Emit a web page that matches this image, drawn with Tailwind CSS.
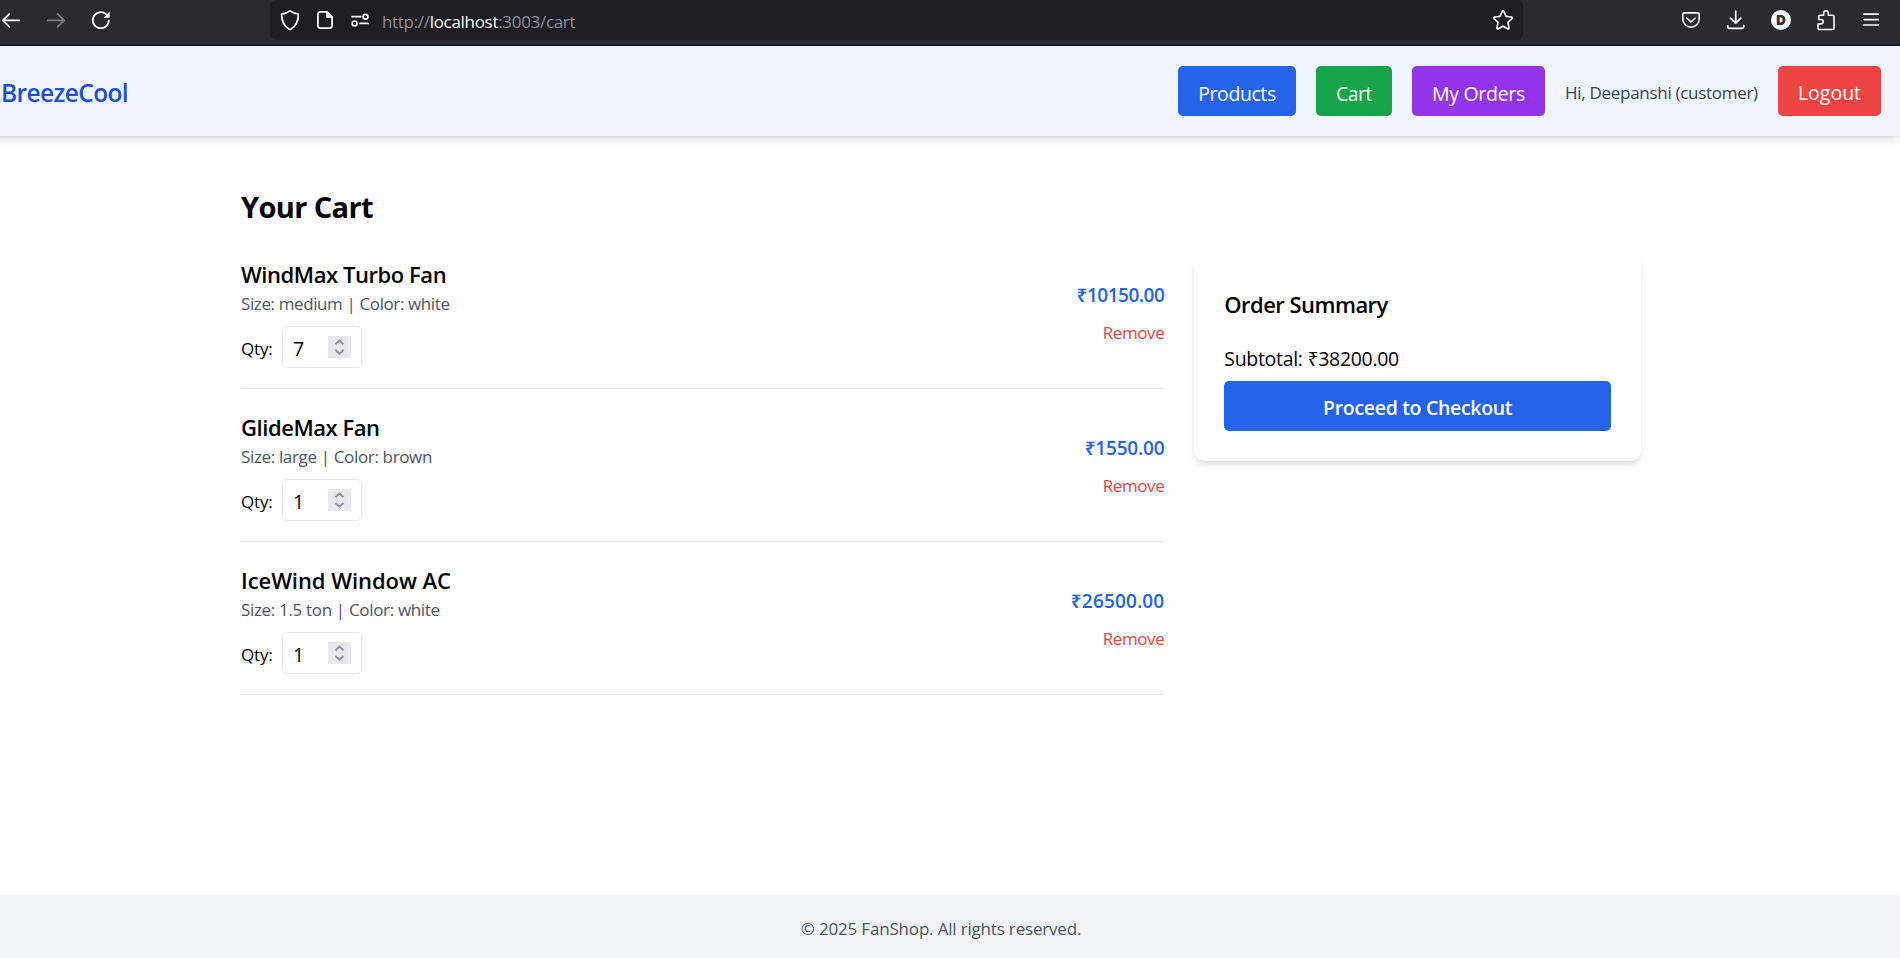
<!DOCTYPE html>
<html lang="en">
<head>
<meta charset="utf-8">
<title>BreezeCool - Cart</title>
<script src="https://cdn.jsdelivr.net/npm/@tailwindcss/browser@4"></script>
</head>
<body class="flex h-screen flex-col overflow-hidden bg-white font-['Open_Sans','Noto_Sans',sans-serif] text-black">

<!-- Browser toolbar -->
<div class="flex h-[46px] shrink-0 items-start justify-between border-b border-[#0c0c0d] bg-[#2b2a33] text-[#fbfbfe]">
  <div class="flex h-10 w-[270px] items-center gap-[25px] pl-px">
    <svg class="size-5" viewBox="0 0 20 20" fill="none" stroke="currentColor" stroke-width="1.8" stroke-linecap="round" stroke-linejoin="round"><path d="M18.2 10.4H1.8M8.4 3.9 1.8 10.4l6.6 6.5"/></svg>
    <svg class="size-5 text-[#7d7c83]" viewBox="0 0 20 20" fill="none" stroke="currentColor" stroke-width="1.8" stroke-linecap="round" stroke-linejoin="round"><path d="M1.8 10.4h16.4M11.6 3.9l6.6 6.5-6.6 6.5"/></svg>
    <svg class="size-5" viewBox="0 0 20 20" fill="none" stroke="currentColor" stroke-width="1.8" stroke-linecap="round"><path d="M17.8 10.6A8 8 0 1 1 15 4.1"/><path d="M18.6 1.6v5.6a.5.5 0 0 1-.5.5h-5.4z" fill="currentColor" stroke="none"/></svg>
  </div>
  <div class="flex h-10 w-[1253px] items-center justify-between rounded-md bg-[#1e1d23] pr-[9px] pl-2.5">
    <div class="flex items-center">
      <svg class="h-[22px] w-5" viewBox="0 0 20 22" fill="none" stroke="currentColor" stroke-width="1.8" stroke-linejoin="round"><path d="M10 1.9c2.300 1.700 4.900 2.600 7.700 3 .5 0 .7.3.7.8-.1 6.300-2.400 11.300-7.600 14.500-.5.3-1.100.3-1.600 0C4 17 1.700 12 1.600 5.700c0-.5.2-.8.7-.8 2.800-.4 5.400-1.300 7.700-3z"/></svg>
      <svg class="ml-[15px] h-5 w-5" viewBox="0 0 20 20" fill="none" stroke="currentColor" stroke-width="1.8" stroke-linejoin="round"><path d="M12 1.900H5.400a2.500 2.500 0 0 0-2.500 2.500v11.200a2.500 2.500 0 0 0 2.500 2.500h9.200a2.500 2.500 0 0 0 2.500-2.500V7z"/><path d="M11.200 1.900v4.700c0 .8.500 1.300 1.300 1.300h4.600z" fill="currentColor" stroke="none"/></svg>
      <svg class="ml-[15px] h-5 w-5" viewBox="0 0 20 20" fill="none" stroke="currentColor" stroke-width="1.700" stroke-linecap="round"><path d="M2 6.700h8.800M10 13.400h8.200"/><circle cx="15.500" cy="6.700" r="2.400"/><circle cx="4.600" cy="13.400" r="2.400"/></svg>
      <span class="ml-3 pt-[3px] text-[17px] leading-6 tracking-[-0.31px] text-[#8f8f96]">http://<span class="text-[#fbfbfe]">localhost</span>:3003/cart</span>
    </div>
    <svg class="size-[22px]" viewBox="0 0 22 22" fill="none" stroke="currentColor" stroke-width="1.700" stroke-linejoin="round"><path d="M10.200 2.400c.3-.7 1.300-.7 1.600 0l2.300 4.900 5.300.7c.8.1 1.100 1 .5 1.600L16 13.400l1 5.400c.1.800-.7 1.400-1.400 1L11 17.200l-4.600 2.600c-.7.400-1.500-.2-1.400-1l1-5.400-3.900-3.800c-.6-.6-.3-1.500.5-1.600l5.300-.7z"/></svg>
  </div>
  <div class="flex h-10 w-[377px] items-center justify-end gap-[25px] pr-[19px]">
    <svg class="size-5" viewBox="0 0 20 20" fill="none" stroke="currentColor" stroke-width="1.600" stroke-linecap="round" stroke-linejoin="round"><path d="M3.600 2.900h12.800A1.800 1.800 0 0 1 18.200 4.700V9a8.200 8.200 0 0 1-16.400 0V4.700a1.800 1.800 0 0 1 1.800-1.800z"/><path d="m5.800 8 4.200 4 4.200-4"/></svg>
    <svg class="size-5" viewBox="0 0 20 20" fill="none" stroke="currentColor" stroke-width="1.700" stroke-linecap="round" stroke-linejoin="round"><path d="M9.700 1v12M4.500 8.200l5.200 5 5.200-5M1.700 15.600v1.200c0 .9.700 1.600 1.600 1.600h12.800c.9 0 1.600-.7 1.600-1.600v-1.200"/></svg>
    <div class="flex size-5 items-center justify-center rounded-full bg-[#fbfbfe] text-[14px] leading-none font-extrabold text-[#2b2a33]">D</div>
    <svg class="h-[22px] w-5" viewBox="0 0 20 22" fill="none" stroke="currentColor" stroke-width="1.600" stroke-linejoin="round"><path d="M7.700 6.200V4a2.300 2.300 0 0 1 4.600 0v2.200h4.400a1.300 1.300 0 0 1 1.300 1.300v11.700a1.300 1.300 0 0 1-1.300 1.300H3.300A1.300 1.300 0 0 1 2 19.200v-4.300h3a2.200 2.200 0 0 0 0-4.400H2.700V7.500A1.300 1.300 0 0 1 4 6.200z"/></svg>
    <svg class="size-5" viewBox="0 0 20 20" fill="none" stroke="currentColor" stroke-width="1.700" stroke-linecap="round"><path d="M2.800 4.200h14.400M2.800 9.600h14.400M2.800 15h14.400"/></svg>
  </div>
</div>

<!-- Page content, scrolled slightly to the right -->
<div class="-ml-[18px] flex w-[1918px] grow flex-col">
  <header class="flex h-[90px] shrink-0 items-center justify-between bg-blue-50 pr-[19px] pl-[19px] shadow-[0_5px_7.5px_-1.25px_rgba(0,0,0,0.1),0_2.5px_5px_-2.5px_rgba(0,0,0,0.1)]">
    <div class="pt-[3px] text-[24.5px] leading-[35px] font-semibold tracking-[-0.6px] text-[#1d4ed8]">BreezeCool</div>
    <nav class="flex items-center gap-5 text-[19.5px] leading-[30px] text-white">
      <a class="h-[50px] w-[118px] rounded-[5px] bg-[#2563eb] pt-[13px] text-center tracking-[-0.42px]">Products</a>
      <a class="h-[50px] w-[76px] rounded-[5px] bg-[#16a34a] pt-[13px] text-center tracking-[-0.5px]">Cart</a>
      <a class="h-[50px] w-[133px] rounded-[5px] bg-[#9333ea] pt-[13px] text-center tracking-[-0.32px]">My Orders</a>
      <span class="w-[193px] pt-0.5 text-[17px] leading-[25px] tracking-[-0.29px] whitespace-nowrap text-[#374151]">Hi, Deepanshi (customer)</span>
      <button class="h-[50px] w-[103px] rounded-[5px] bg-[#ef4444] pt-1 text-center">Logout</button>
    </nav>
  </header>

  <main class="mx-auto w-[1400px] grow pt-[50px]">
    <h1 class="mb-[29px] pt-px text-[29px] leading-10 font-bold tracking-[-0.62px]">Your Cart</h1>
    <div class="grid grid-cols-3 items-start gap-[30px]">
      <div class="col-span-2 flex flex-col gap-5">

        <div class="flex h-[133px] items-center justify-between border-b border-gray-200 pb-5">
          <div>
            <h2 class="pt-0.5 text-[22px] leading-[33px] font-semibold tracking-[-0.44px]">WindMax Turbo Fan</h2>
            <p class="pt-px text-[17px] leading-6 tracking-[-0.39px] text-[#4b5563]">Size: medium | Color: white</p>
            <div class="mt-2.5 flex items-center">
              <label class="w-[41px] pt-0.5 text-[17px] leading-[25px] tracking-[-0.2px]">Qty:</label>
              <div class="flex h-[42px] w-20 items-center justify-between rounded-[5px] border border-gray-200 pr-2.5 pl-2.5">
                <span class="pt-[3px] text-[19.5px] leading-[30px]">7</span>
                <svg class="-mt-px h-[22px] w-[23px] bg-[#e9e9ed]" viewBox="0 0 23 22" fill="none" stroke="#8f8f9d" stroke-width="1.900"><path d="m7.500 8.300 4-3.700 4 3.700M7.500 14l4 3.700 4-3.700"/></svg>
              </div>
            </div>
          </div>
          <div class="flex flex-col items-end">
            <p class="text-[19px] leading-[30px] font-semibold tracking-[-0.48px] text-[#2563eb]">₹10150.00</p>
            <button class="mt-2.5 text-[17px] leading-[25px] tracking-[-0.4px] text-[#ef4444]">Remove</button>
          </div>
        </div>

        <div class="flex h-[133px] items-center justify-between border-b border-gray-200 pb-5">
          <div>
            <h2 class="pt-0.5 text-[22px] leading-[33px] font-semibold tracking-[-0.44px]">GlideMax Fan</h2>
            <p class="pt-px text-[17px] leading-6 tracking-[-0.35px] text-[#4b5563]">Size: large | Color: brown</p>
            <div class="mt-2.5 flex items-center">
              <label class="w-[41px] pt-0.5 text-[17px] leading-[25px] tracking-[-0.2px]">Qty:</label>
              <div class="flex h-[42px] w-20 items-center justify-between rounded-[5px] border border-gray-200 pr-2.5 pl-2.5">
                <span class="pt-[3px] text-[19.5px] leading-[30px]">1</span>
                <svg class="-mt-px h-[22px] w-[23px] bg-[#e9e9ed]" viewBox="0 0 23 22" fill="none" stroke="#8f8f9d" stroke-width="1.900"><path d="m7.500 8.300 4-3.700 4 3.700M7.500 14l4 3.700 4-3.700"/></svg>
              </div>
            </div>
          </div>
          <div class="flex flex-col items-end">
            <p class="text-[19px] leading-[30px] font-semibold tracking-[-0.2px] text-[#2563eb]">₹1550.00</p>
            <button class="mt-2.5 text-[17px] leading-[25px] tracking-[-0.4px] text-[#ef4444]">Remove</button>
          </div>
        </div>

        <div class="flex h-[133px] items-center justify-between border-b border-gray-200 pb-5">
          <div>
            <h2 class="pt-0.5 text-[22px] leading-[33px] font-semibold tracking-[-0.06px]">IceWind Window AC</h2>
            <p class="pt-px text-[17px] leading-6 tracking-[-0.33px] text-[#4b5563]">Size: 1.5 ton | Color: white</p>
            <div class="mt-2.5 flex items-center">
              <label class="w-[41px] pt-0.5 text-[17px] leading-[25px] tracking-[-0.2px]">Qty:</label>
              <div class="flex h-[42px] w-20 items-center justify-between rounded-[5px] border border-gray-200 pr-2.5 pl-2.5">
                <span class="pt-[3px] text-[19.5px] leading-[30px]">1</span>
                <svg class="-mt-px h-[22px] w-[23px] bg-[#e9e9ed]" viewBox="0 0 23 22" fill="none" stroke="#8f8f9d" stroke-width="1.900"><path d="m7.500 8.300 4-3.700 4 3.700M7.500 14l4 3.700 4-3.700"/></svg>
              </div>
            </div>
          </div>
          <div class="flex flex-col items-end">
            <p class="text-[19px] leading-[30px] font-semibold tracking-[0.15px] text-[#2563eb]">₹26500.00</p>
            <button class="mt-2.5 text-[17px] leading-[25px] tracking-[-0.4px] text-[#ef4444]">Remove</button>
          </div>
        </div>
      </div>

      <aside class="rounded-[10px] bg-white p-[30px] shadow-[0_5px_7.5px_-1.25px_rgba(0,0,0,0.1),0_2.5px_5px_-2.5px_rgba(0,0,0,0.1)]">
        <h2 class="mb-5 pt-0.5 text-[22px] leading-[33px] font-semibold tracking-[-0.54px]">Order Summary</h2>
        <p class="mb-2 pt-1 text-[19.5px] leading-[28px] tracking-[-0.31px]">Subtotal: ₹38200.00</p>
        <button class="h-[50px] w-full rounded-[5px] bg-[#2563eb] pt-1 text-[19.5px] leading-[30px] font-semibold tracking-[-0.32px] text-white">Proceed to Checkout</button>
      </aside>
    </div>
  </main>

  <footer class="h-[63px] shrink-0 bg-gray-100 pt-[21px] text-center text-[17px] leading-[25px] tracking-[-0.18px] text-[#4b5563]">© 2025 FanShop. All rights reserved.</footer>
</div>
</body>
</html>
